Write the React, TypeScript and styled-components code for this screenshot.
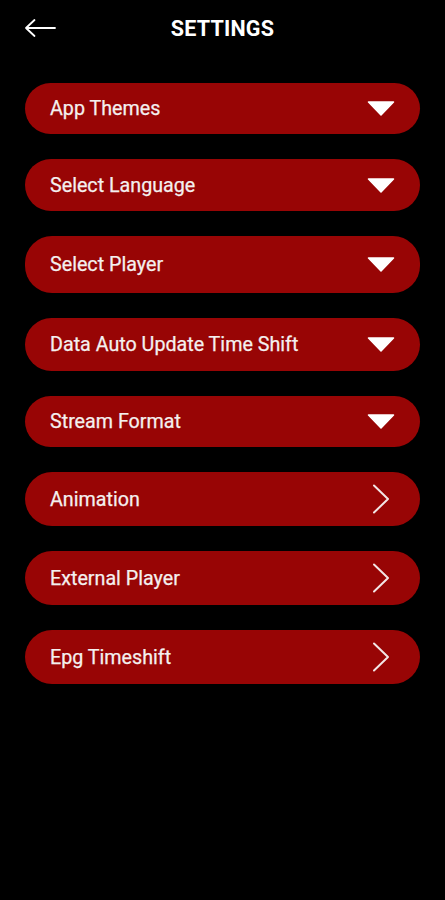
import styled, { createGlobalStyle } from "styled-components";

const GlobalStyle = createGlobalStyle`
  html, body {
    margin: 0;
    padding: 0;
    background: #000;
  }
  body {
    font-family: Roboto, "Liberation Sans", sans-serif;
  }
`;

const Screen = styled.div`
  width: 445px;
  min-height: 900px;
  background: #000;
  color: #fff;
`;

const Header = styled.div`
  position: relative;
  height: 56px;
  display: flex;
  align-items: center;
  justify-content: center;
`;

const BackButton = styled.button`
  position: absolute;
  left: 24px;
  top: 17px;
  width: 32px;
  height: 22px;
  padding: 0;
  border: none;
  background: none;
  cursor: pointer;
  display: flex;
  align-items: center;
`;

const Title = styled.h1`
  margin: 0;
  font-size: 21.5px;
  font-weight: 700;
  letter-spacing: 0.2px;
`;

const List = styled.div`
  display: flex;
  flex-direction: column;
  gap: 25px;
  padding: 27px 25px 0;
`;

const Row = styled.div<{ $h: number }>`
  height: ${(p) => p.$h}px;
  border-radius: 27px;
  background: #980505;
  display: flex;
  align-items: center;
  justify-content: space-between;
  padding: 0 24px 0 25px;
  box-sizing: border-box;
`;

const Label = styled.span`
  font-size: 19.7px;
  font-weight: 400;
  color: #f4f0ef;
  -webkit-text-stroke: 0.25px #f4f0ef;
`;

const IconBox = styled.span`
  width: 30px;
  display: flex;
  justify-content: center;
  align-items: center;
`;

const Caret = () => (
  <svg width="28" height="15" viewBox="0 0 28 15">
    <path d="M1.5 1 H26.5 L14 14 Z" fill="#fff" stroke="#fff" strokeWidth="1.5" strokeLinejoin="round" />
  </svg>
);

const Chevron = () => (
  <svg width="18" height="30" viewBox="0 0 18 30">
    <path d="M2 1.5 L16 15 L2 28.5" fill="none" stroke="#f2e6e6" strokeWidth="2" strokeLinecap="round" strokeLinejoin="round" />
  </svg>
);

const items: { label: string; kind: "drop" | "next"; h: number }[] = [
  { label: "App Themes", kind: "drop", h: 51 },
  { label: "Select Language", kind: "drop", h: 52 },
  { label: "Select Player", kind: "drop", h: 57 },
  { label: "Data Auto Update Time Shift", kind: "drop", h: 53 },
  { label: "Stream Format", kind: "drop", h: 51 },
  { label: "Animation", kind: "next", h: 54 },
  { label: "External Player", kind: "next", h: 54 },
  { label: "Epg Timeshift", kind: "next", h: 54 },
];

const App = () => {
  return (
    <Screen>
      <GlobalStyle />
      <Header>
        <BackButton aria-label="back">
          <svg width="32" height="20" viewBox="0 0 32 20">
            <path d="M31 10 H2 M10.5 2 L2 10 L10.5 18" fill="none" stroke="#fff" strokeWidth="1.8" strokeLinecap="round" strokeLinejoin="round" />
          </svg>
        </BackButton>
        <Title>SETTINGS</Title>
      </Header>
      <List>
        {items.map((it) => (
          <Row key={it.label} $h={it.h}>
            <Label>{it.label}</Label>
            <IconBox>{it.kind === "drop" ? <Caret /> : <Chevron />}</IconBox>
          </Row>
        ))}
      </List>
    </Screen>
  );
};

export default App;
